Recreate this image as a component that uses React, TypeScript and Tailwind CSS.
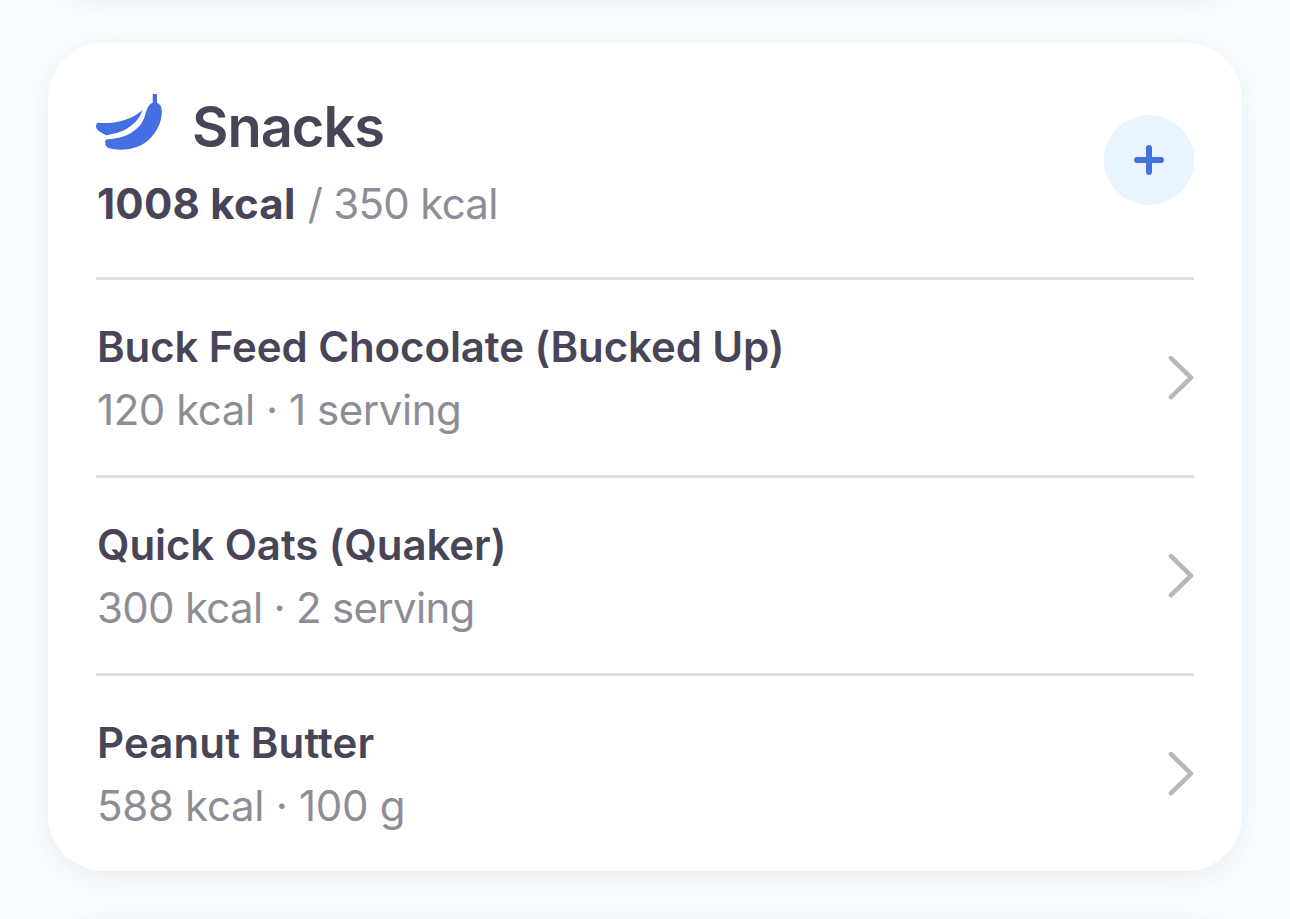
const foods = [
  { name: "Buck Feed Chocolate (Bucked Up)", detail: "120 kcal · 1 serving", nameSpacing: "tracking-[-0.1px]", detailSpacing: "tracking-[-0.45px]" },
  { name: "Quick Oats (Quaker)", detail: "300 kcal · 2 serving", nameSpacing: "tracking-[-0.08px]", detailSpacing: "tracking-[-0.7px]" },
  { name: "Peanut Butter", detail: "588 kcal · 100 g", nameSpacing: "tracking-[0.12px]", detailSpacing: "tracking-[-0.3px]" },
];

function BananaIcon() {
  return (
    <svg className="h-14 w-[66px]" viewBox="0 0 66 56" fill="#4470e4">
      <path d="M2.5 28.8C15 30 33 28 46.3 16.3C45 20 44.3 22 42.3 24.3C40 28 37.5 30 34 32.4C30.5 35 27.5 36.6 24 37.8C19.5 39.5 15 40.5 10.2 41.2C7 39.5 3 37.8 0.8 35C-0.6 33 0 28.8 2.5 28.8Z" />
      <path d="M56.7 0H61V8.8C64 10.3 65.5 12.5 65.8 16C66.3 26 62 38 52 46.5C41 56 24 57.5 12.5 54C10 53 9 50.5 9.2 48C9.3 46.2 10 45.2 11.5 45.2C17.5 44.9 22.5 44.2 27.3 42.5C32 41 35.8 38.8 39 36C42.8 33 45.5 30 47.3 26C49 22.5 49.4 19.5 50.7 16C52 12.5 53.5 9.8 56.7 8.8Z" />
    </svg>
  );
}

function PlusIcon() {
  return (
    <svg className="size-[30px]" viewBox="0 0 30 30" fill="none" stroke="#4670e0" strokeWidth="6" strokeLinecap="round">
      <path d="M15 3V27M3 15H27" />
    </svg>
  );
}

function ChevronIcon() {
  return (
    <svg className="h-11 w-[26px] shrink-0" viewBox="0 0 26 44" fill="none" stroke="#b8b8b8" strokeWidth="4.6" strokeLinecap="round" strokeLinejoin="round">
      <path d="M3 2.2L23 21.7L3 41.2" />
    </svg>
  );
}

export default function App() {
  return (
    <main className="flex h-[919px] w-[1290px] flex-col gap-12 overflow-hidden bg-[#f7fcff] px-12 font-['Inter',sans-serif] text-[#484558]">
      <div className="-mt-[105px] h-[100px] shrink-0 rounded-[56px] bg-white shadow-[0_6px_24px_rgba(50,50,80,0.07)]" />

      <section className="h-[828px] shrink-0 rounded-[56px] bg-white px-12 shadow-[0_6px_24px_rgba(50,50,80,0.07)]">
        <header className="flex h-[234px] items-center justify-between">
          <div className="flex flex-col pt-1.5">
            <div className="flex items-center gap-[30px]">
              <div className="-mt-2.5">
                <BananaIcon />
              </div>
              <h1 className="text-[56px] leading-[72px] font-semibold tracking-[-1px]">Snacks</h1>
            </div>
            <p className="mt-[9px] pl-px text-[42px] leading-[64px] tracking-[-0.7px] text-[#8e8d96]">
              <span className="font-bold tracking-[0.25px] text-[#484558]">1008 kcal</span>
              <span className="ml-px"> / </span>350 kcal
            </p>
          </div>
          <button className="flex size-[90px] items-center justify-center rounded-full bg-[#e8f4ff]">
            <PlusIcon />
          </button>
        </header>

        {foods.map((food) => (
          <div key={food.name} className="flex h-[198px] items-center justify-between border-t-3 border-[#e0e0e2]">
            <div className="pl-px">
              <h2 className={`text-[42px] leading-[63px] font-semibold ${food.nameSpacing}`}>{food.name}</h2>
              <p className={`text-[42px] leading-[63px] text-[#8e8d96] ${food.detailSpacing}`}>{food.detail}</p>
            </div>
            <ChevronIcon />
          </div>
        ))}
      </section>

      <div className="h-[100px] shrink-0 rounded-[56px] bg-white shadow-[0_6px_24px_rgba(50,50,80,0.07)]" />
    </main>
  );
}
